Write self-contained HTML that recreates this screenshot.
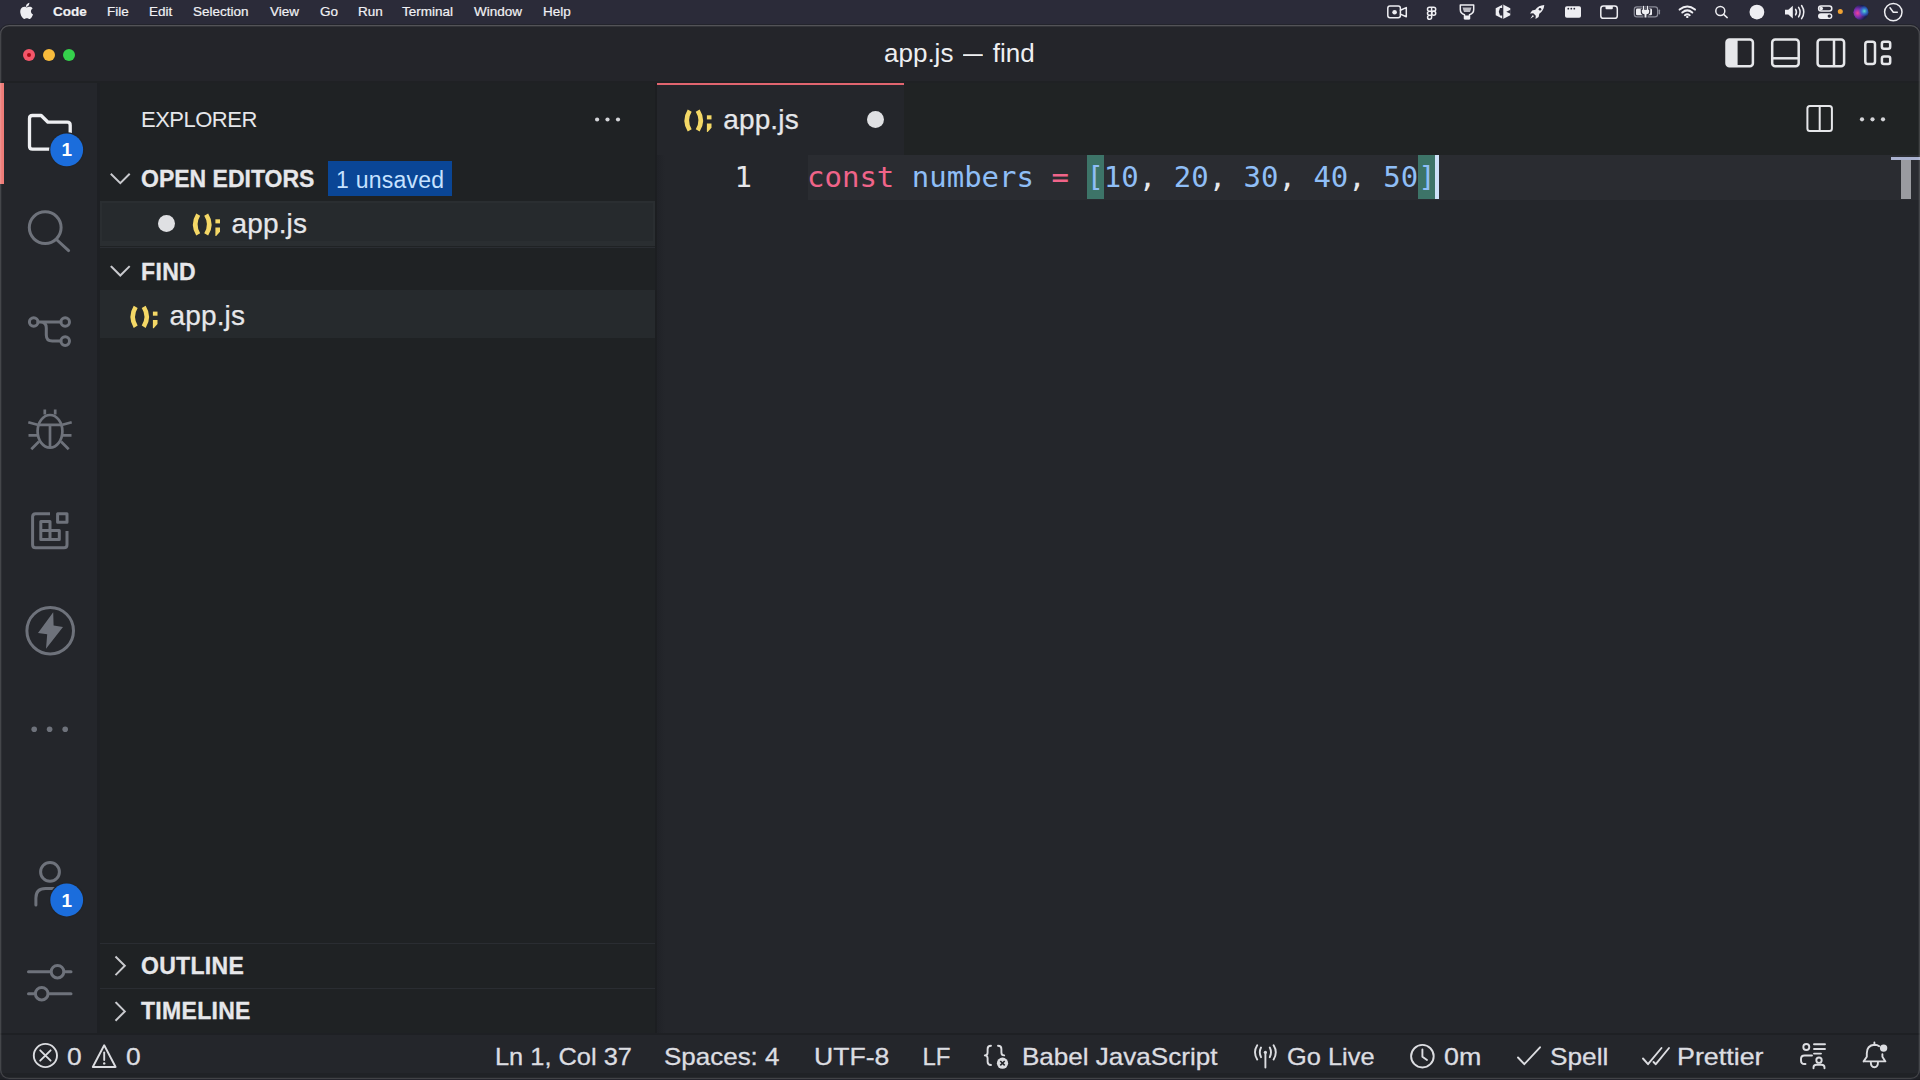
<!DOCTYPE html>
<html lang="en">
<head>
<meta charset="utf-8">
<title>app.js — find</title>
<style>
*{box-sizing:border-box;margin:0;padding:0}
html,body{width:1920px;height:1080px;overflow:hidden;background:#2b2b39}
body{position:relative;font-family:"Liberation Sans",sans-serif;color:#e6e7ea}
.b{position:absolute}
.t{position:absolute;white-space:nowrap;line-height:1}
svg{position:absolute;overflow:visible}
.ic{fill:none;stroke:#6e727b;stroke-width:2.6;stroke-linecap:round;stroke-linejoin:round}
.iw{fill:none;stroke:#e4e5e8;stroke-width:2;stroke-linecap:round;stroke-linejoin:round}
#menubar .t{font-size:13.5px;color:#f1f1f4;top:5px;-webkit-text-stroke:.2px #f1f1f4}
.hdr{font-size:23px;font-weight:bold;color:#e6e7ea;-webkit-text-stroke:.3px #e6e7ea}
.file{font-size:28px;letter-spacing:.15px;color:#e6e7ea;-webkit-text-stroke:.25px #e6e7ea}
.sb{font-size:24px;color:#dcdde1;top:1045px;transform-origin:0 50%;-webkit-text-stroke:.3px #dcdde1}
.code{font-family:"DejaVu Sans Mono","Liberation Mono",monospace;font-size:29px}
</style>
</head>
<body>
<!-- ===== macOS menu bar ===== -->
<div id="menubar" class="b" style="left:0;top:0;width:1920px;height:25px;background:#2b2b39">
  <span class="t" style="left:53px;font-weight:bold">Code</span>
  <span class="t" style="left:107px">File</span>
  <span class="t" style="left:149px">Edit</span>
  <span class="t" style="left:193px">Selection</span>
  <span class="t" style="left:270px">View</span>
  <span class="t" style="left:320px">Go</span>
  <span class="t" style="left:358px">Run</span>
  <span class="t" style="left:402px">Terminal</span>
  <span class="t" style="left:474px">Window</span>
  <span class="t" style="left:543px">Help</span>
</div>
<svg class="b" style="left:0;top:0" width="1920" height="25" viewBox="0 0 1920 25"><path d="M26.9 3.4C27 4.6 26.6 5.6 25.9 6.400C25.200 7.200 24.300 7.700 23.300 7.600C23.200 6.500 23.700 5.500 24.300 4.800C25 4 26.100 3.500 26.900 3.400ZM30.300 9.100C29.300 9.700 28.500 10.700 28.500 12.100C28.500 13.700 29.500 14.900 30.700 15.400C30.400 16.300 29.900 17.200 29.300 18C28.600 19 27.800 19.800 26.800 19.800C25.800 19.800 25.500 19.200 24.300 19.200C23.100 19.200 22.700 19.800 21.800 19.800C20.800 19.900 20 18.900 19.300 17.900C17.800 15.800 16.700 12 18.200 9.500C18.900 8.200 20.300 7.400 21.700 7.400C22.700 7.400 23.700 8.100 24.300 8.100C24.900 8.100 26.100 7.300 27.400 7.400C27.900 7.400 29.400 7.600 30.300 9.100Z" fill="#eeeef2" transform="translate(3.4,-0.5) scale(.965,.98)"/><rect x="1387.8" y="6.1" width="12.6" height="11.7" rx="2.2" fill="none" stroke="#eeeef2" stroke-width="1.5" stroke-linejoin="round" stroke-linecap="round"/><circle cx="1394.6" cy="12.3" r="2.3" fill="#eeeef2"/><path d="M1400.4 10.3L1406.3 7.6V16.8L1400.4 14.1" fill="none" stroke="#eeeef2" stroke-width="1.5" stroke-linejoin="round" stroke-linecap="round"/><path d="M1431.6 7.300H1429.500A2 2 0 0 0 1429.500 11.300H1431.600ZM1431.600 11.300H1429.500A2 2 0 0 0 1429.500 15.300H1431.600ZM1431.600 7.300H1433.700A2 2 0 0 1 1433.700 11.300H1431.600ZM1431.600 15.300H1429.500A2 2 0 1 0 1431.600 17.300Z" fill="none" stroke="#eeeef2" stroke-width="1.5" stroke-linejoin="round" stroke-linecap="round" stroke-width="1.300"/><circle cx="1433.700" cy="13.300" r="2" fill="none" stroke="#eeeef2" stroke-width="1.5" stroke-linejoin="round" stroke-linecap="round" stroke-width="1.300"/><path d="M1460.3 5H1473.700V9.500Q1473.700 13.500 1469.500 14.800V18.800H1464.500V14.800Q1460.300 13.500 1460.300 9.500Z" fill="none" stroke="#eeeef2" stroke-width="1.5" stroke-linejoin="round" stroke-linecap="round" stroke-width="1.600"/><path d="M1462.5 7.500H1471.500L1470 12H1464Z" fill="#eeeef2" opacity=".75"/><rect x="1464.800" y="15.500" width="4.400" height="3.800" fill="#eeeef2"/><path d="M1503 4.5L1510.3 8.2V15.3L1503 19L1495.700 15.300V8.200Z" fill="#eeeef2"/><path d="M1502.200 4.500H1503.300V19H1502.200Z M1500 8H1503.300V15.500H1500L1498.800 11.800Z" fill="#2b2b39"/><path d="M1510.500 9.800L1506.300 11.800L1510.500 13.700Z" fill="#2b2b39"/><path d="M1544.300 5Q1538.500 5.300 1535.300 9.800L1532.200 10.500L1530 13.600L1533.300 13.300L1535.800 15.800L1535.500 19L1538.600 16.900L1539.300 13.800Q1543.800 10.600 1544.300 5Z" fill="#eeeef2"/><circle cx="1540" cy="9.300" r="1.300" fill="#2b2b39"/><path d="M1532.800 15L1530.300 18.700L1534 16.300Z" fill="#eeeef2"/><rect x="1565" y="6.300" width="16" height="11.400" rx="1.800" fill="#eeeef2"/><circle cx="1568.300" cy="8.700" r="0.900" fill="#2b2b39"/><circle cx="1571.300" cy="8.700" r="0.900" fill="#2b2b39"/><circle cx="1574.300" cy="8.700" r="0.900" fill="#2b2b39"/><rect x="1600.800" y="6.100" width="16.500" height="12.200" rx="2.600" fill="none" stroke="#eeeef2" stroke-width="1.5" stroke-linejoin="round" stroke-linecap="round" stroke-width="1.600"/><path d="M1605.500 6H1612.800V8.300Q1612.800 9.300 1611.800 9.300H1606.500Q1605.500 9.300 1605.500 8.300Z" fill="#eeeef2"/><rect x="1634.300" y="6.900" width="23.300" height="10" rx="2.600" fill="none" stroke="#8b8c98" stroke-width="1.200"/><path d="M1659.300 10.300V13.700" stroke="#8b8c98" stroke-width="1.500" stroke-linecap="round"/><rect x="1636" y="8.600" width="16" height="6.600" rx="1.300" fill="#eeeef2"/><path d="M1643.500 6.300V9.500M1647.500 6.300V9.500" stroke="#2b2b39" stroke-width="3.200"/><path d="M1641.300 9.300H1649.700V12Q1649.700 14.300 1647 14.800V18H1644V14.800Q1641.300 14.300 1641.300 12Z" fill="#eeeef2" stroke="#2b2b39" stroke-width="1.100"/><path d="M1643.500 6.500V9.500M1647.500 6.500V9.500" stroke="#eeeef2" stroke-width="1.400" stroke-linecap="round"/><path d="M1679.600 9.600Q1687.300 3.300 1695 9.600M1682.300 12.500Q1687.300 8.300 1692.300 12.500M1684.900 15.200Q1687.300 13.300 1689.700 15.200" fill="none" stroke="#eeeef2" stroke-width="2" stroke-linecap="round"/><circle cx="1687.300" cy="16.900" r="1.200" fill="#eeeef2"/><circle cx="1720.300" cy="11" r="4.500" fill="none" stroke="#eeeef2" stroke-width="1.5" stroke-linejoin="round" stroke-linecap="round" stroke-width="1.700"/><path d="M1723.600 14.400L1727.200 17.600" fill="none" stroke="#eeeef2" stroke-width="1.5" stroke-linejoin="round" stroke-linecap="round" stroke-width="1.900"/><circle cx="1756.900" cy="12.100" r="7.400" fill="#eeeef2"/><path d="M1785 9.800H1788.300L1792.800 5.800V18.400L1788.300 14.400H1785Z" fill="#eeeef2"/><path d="M1795.600 9.300Q1797.300 12.100 1795.600 14.900M1798.600 7.300Q1801.600 12.100 1798.600 16.900M1801.600 5.500Q1806 12.100 1801.600 18.700" fill="none" stroke="#eeeef2" stroke-width="1.500" stroke-linecap="round"/><rect x="1818.600" y="6" width="13.200" height="4.900" rx="2.450" fill="none" stroke="#eeeef2" stroke-width="1.5" stroke-linejoin="round" stroke-linecap="round" stroke-width="1.300"/><circle cx="1821.300" cy="8.450" r="1.700" fill="#eeeef2"/><rect x="1818" y="13.200" width="14.400" height="5.800" rx="2.900" fill="#eeeef2"/><circle cx="1829.300" cy="16.100" r="1.700" fill="#2b2b39"/><circle cx="1840.300" cy="11.600" r="2.500" fill="#f0a233"/><defs><radialGradient id="sg1" cx="28%" cy="55%" r="55%"><stop offset="0" stop-color="#f0409a"/><stop offset="0.5" stop-color="#7a2fb0"/><stop offset="1" stop-color="#1b2050"/></radialGradient><radialGradient id="sg2" cx="72%" cy="42%" r="38%"><stop offset="0" stop-color="#56e6d4"/><stop offset="0.600" stop-color="#2f6fe0" stop-opacity=".7"/><stop offset="1" stop-color="#2f6fe0" stop-opacity="0"/></radialGradient></defs><circle cx="1861" cy="12.300" r="7.600" fill="url(#sg1)"/><circle cx="1861" cy="12.300" r="7.600" fill="url(#sg2)"/><circle cx="1893.300" cy="12.100" r="8.700" fill="none" stroke="#eeeef2" stroke-width="1.5" stroke-linejoin="round" stroke-linecap="round" stroke-width="1.300"/><path d="M1890 7.800L1893.300 12.300H1897.300" fill="none" stroke="#eeeef2" stroke-width="1.5" stroke-linejoin="round" stroke-linecap="round" stroke-width="1.300"/></svg>

<!-- ===== window ===== -->
<div id="win" class="b" style="left:0;top:25px;width:1920px;height:1055px;background:#24262b;border-radius:11px 11px 0 0;overflow:hidden">
</div>
<!-- title bar -->
<div class="b" style="left:0;top:25px;width:1920px;height:55.5px;background:#24252a;border-radius:9px 9px 0 0"></div>
<div class="b" style="left:0;top:80.5px;width:1920px;height:2.5px;background:#1f2124"></div>
<span class="t" id="title" style="left:884px;top:40px;font-size:26px;color:#eeeff1">app.js <span style="display:inline-block;transform:scaleX(.76);margin:0 -0.5px 0 -0.5px">—</span> find</span>
<div class="b" style="left:23px;top:49px;width:12px;height:12px;border-radius:50%;background:#f4566a"></div>
<div class="b" style="left:27px;top:53px;width:4px;height:4px;border-radius:50%;background:#a80812"></div>
<div class="b" style="left:43px;top:49px;width:12px;height:12px;border-radius:50%;background:#f8bb3c"></div>
<div class="b" style="left:63px;top:49px;width:12px;height:12px;border-radius:50%;background:#35d24c"></div>
<svg class="b" style="left:0;top:0" width="1920" height="1080" viewBox="0 0 1920 1080" ><rect x="1726.5" y="39.6" width="26.4" height="26.6" rx="3" fill="none" stroke="#e6e7ea" stroke-width="2.5"/><path d="M1729.5 39.6H1737.6V66.2H1729.5Q1726.5 66.2 1726.5 63.2V42.6Q1726.5 39.6 1729.5 39.6Z" fill="#e6e7ea"/><rect x="1772.2" y="39.6" width="26.5" height="26.6" rx="3" fill="none" stroke="#e6e7ea" stroke-width="2.5"/><line x1="1772.2" y1="58.3" x2="1798.7" y2="58.3" fill="none" stroke="#e6e7ea" stroke-width="2.5"/><rect x="1817.6" y="39.6" width="26.5" height="26.6" rx="3" fill="none" stroke="#e6e7ea" stroke-width="2.5"/><line x1="1834" y1="39.6" x2="1834" y2="66.2" fill="none" stroke="#e6e7ea" stroke-width="2.5"/><rect x="1865.3" y="41.8" width="9.7" height="22.2" rx="2.5" fill="none" stroke="#e6e7ea" stroke-width="2.5"/><rect x="1881.9" y="41.8" width="8.3" height="6.9" rx="2" fill="none" stroke="#e6e7ea" stroke-width="2.5"/><rect x="1881.9" y="56.6" width="8.3" height="7.4" rx="2" fill="none" stroke="#e6e7ea" stroke-width="2.5"/></svg>

<!-- activity bar -->
<div class="b" style="left:0;top:83px;width:97px;height:951px;background:#24262b"></div>
<div class="b" style="left:97px;top:83px;width:3px;height:951px;background:#1e2024"></div>
<div class="b" style="left:0;top:83px;width:4px;height:101px;background:#ee7c78"></div>
<svg class="b" style="left:0;top:0" width="1920" height="1080" viewBox="0 0 1920 1080" ><path d="M32.5 115.5H41.2L48 122.2H67.2Q70.2 122.2 70.2 125.2V149.2H32.5Q29.5 149.2 29.5 146.2V118.5Q29.5 115.5 32.5 115.5Z" fill="none" stroke="#eeeff2" stroke-width="3.3" stroke-linejoin="round"/><circle cx="45.2" cy="227.6" r="15.9" fill="none" stroke="#6e727b" stroke-width="3" stroke-linecap="round" stroke-linejoin="round"/><line x1="57" y1="240" x2="68.6" y2="250.6" fill="none" stroke="#6e727b" stroke-width="3" stroke-linecap="round" stroke-linejoin="round" stroke-linecap="butt"/><circle cx="33.7" cy="322" r="4.3" fill="none" stroke="#6e727b" stroke-width="3" stroke-linecap="round" stroke-linejoin="round"/><circle cx="65.2" cy="322" r="4.3" fill="none" stroke="#6e727b" stroke-width="3" stroke-linecap="round" stroke-linejoin="round"/><circle cx="65.2" cy="341.1" r="4.3" fill="none" stroke="#6e727b" stroke-width="3" stroke-linecap="round" stroke-linejoin="round"/><path d="M38 322H60.9M40.5 322Q46.3 322 46.3 328V335Q46.3 341.1 52.3 341.1H60.9" fill="none" stroke="#6e727b" stroke-width="3" stroke-linecap="round" stroke-linejoin="round"/><ellipse cx="50" cy="431.3" rx="12.4" ry="16.3" fill="none" stroke="#6e727b" stroke-width="2.7" stroke-linecap="butt" stroke-linejoin="round"/><path d="M37.8 424.8H62.2M50 424.8V447.5M44.8 409.5V414.5M55.2 409.5V414.5M28.3 422.3L37.5 424.8M71.7 422.3L62.5 424.8M28.5 435.3H37.5M71.5 435.3H62.5M31.3 449.2L39 441.5M68.7 449.2L61 441.5" fill="none" stroke="#6e727b" stroke-width="2.7" stroke-linecap="butt" stroke-linejoin="round"/><path d="M50 513.7H35.6Q32.6 513.7 32.6 516.7V544.8Q32.6 547.8 35.6 547.8H64Q67 547.8 67 544.8V531" fill="none" stroke="#6e727b" stroke-width="3" stroke-linejoin="round"/><rect x="57.6" y="513.7" width="9.4" height="8.6" fill="none" stroke="#6e727b" stroke-width="3" stroke-linejoin="round"/><path d="M40.8 521.5H50V530.5H59.3V539.6H40.8ZM40.8 530.5H50V539.6" fill="none" stroke="#6e727b" stroke-width="3" stroke-linejoin="round"/><circle cx="50.2" cy="630.7" r="23.3" fill="none" stroke="#6e727b" stroke-width="3" stroke-linecap="round" stroke-linejoin="round"/><polygon points="53.2,612.2 38,633 47.2,634.3 46,648.8 63,627 53.6,625.6" fill="#6e727b"/><circle cx="34.2" cy="729.3" r="2.8" fill="#6e727b"/><circle cx="49.6" cy="729.3" r="2.8" fill="#6e727b"/><circle cx="65.2" cy="729.3" r="2.8" fill="#6e727b"/><circle cx="50" cy="871.9" r="9.4" fill="none" stroke="#6e727b" stroke-width="3" stroke-linecap="round" stroke-linejoin="round"/><path d="M35.9 905V898Q35.9 888.6 45.5 888.6H58" fill="none" stroke="#6e727b" stroke-width="3" stroke-linecap="round" stroke-linejoin="round"/><path d="M28.5 971.7H50M65 971.7H71M28.5 993.7H34M49.5 993.7H71" fill="none" stroke="#6e727b" stroke-width="3" stroke-linecap="round" stroke-linejoin="round"/><circle cx="57.5" cy="971.7" r="6.3" fill="none" stroke="#6e727b" stroke-width="3" stroke-linecap="round" stroke-linejoin="round"/><circle cx="41.7" cy="993.7" r="6.3" fill="none" stroke="#6e727b" stroke-width="3" stroke-linecap="round" stroke-linejoin="round"/><circle cx="66.7" cy="149.8" r="17.6" fill="#222429"/><circle cx="66.7" cy="149.8" r="16.4" fill="#1b6ddc"/><circle cx="66.7" cy="900" r="17.6" fill="#222429"/><circle cx="66.7" cy="900" r="16.4" fill="#1b6ddc"/></svg><span class="t" style="left:61.4px;top:140.4px;font-size:19px;font-weight:bold;color:#fff">1</span><span class="t" style="left:61.4px;top:890.6px;font-size:19px;font-weight:bold;color:#fff">1</span>

<!-- sidebar -->
<div class="b" style="left:100px;top:83px;width:555px;height:951px;background:#1f2224"></div>
<div class="b" style="left:655px;top:83px;width:2px;height:951px;background:#1c1e21"></div>
<span class="t" style="left:141px;top:109px;font-size:22px;letter-spacing:-0.5px;color:#e6e7ea">EXPLORER</span>
<span class="t hdr" style="left:141px;top:168px">OPEN EDITORS</span>
<div class="b" style="left:328px;top:161px;width:123.500px;height:35px;background:#0a4696"></div>
<span class="t" style="left:336px;top:169px;font-size:23px;letter-spacing:.25px;color:#c6e2ff">1 unsaved</span>
<div class="b" style="left:100px;top:201px;width:555px;height:45.3px;background:#262a2d;border:2px solid #2a2e31;border-bottom-width:5px"></div>
<div class="b" style="left:157.5px;top:215px;width:17px;height:17px;border-radius:50%;background:#dfe0e3"></div>
<span class="t file" style="left:231.5px;top:209.5px">app.js</span>
<div class="b" style="left:100px;top:247px;width:555px;height:1px;background:#2a2d32"></div>
<span class="t hdr" style="left:141px;top:260.5px;letter-spacing:.35px">FIND</span>
<div class="b" style="left:100px;top:289.5px;width:555px;height:48.5px;background:#262a2d"></div>
<span class="t file" style="left:169.5px;top:301.5px">app.js</span>
<div class="b" style="left:100px;top:943px;width:555px;height:1px;background:#2a2d32"></div>
<span class="t hdr" style="left:141px;top:954.5px;letter-spacing:.3px">OUTLINE</span>
<div class="b" style="left:100px;top:988px;width:555px;height:1px;background:#2a2d32"></div>
<span class="t hdr" style="left:141px;top:1000.3px;letter-spacing:.3px">TIMELINE</span>
<svg class="b" style="left:0;top:0" width="1920" height="1080" viewBox="0 0 1920 1080" ><polyline fill="none" stroke="#c9cace" stroke-width="2" stroke-linecap="square" stroke-linejoin="miter" points="111.5,174.5 120.3,183.2 129,174.5"/><polyline fill="none" stroke="#c9cace" stroke-width="2" stroke-linecap="square" stroke-linejoin="miter" points="111.5,266.8 120.3,275.5 129,266.8"/><polyline fill="none" stroke="#c9cace" stroke-width="2" stroke-linecap="square" stroke-linejoin="miter" points="116.2,957.2 124.8,965.8 116.2,974.4"/><polyline fill="none" stroke="#c9cace" stroke-width="2" stroke-linecap="square" stroke-linejoin="miter" points="116.2,1002.8 124.8,1011.4 116.2,1020"/><circle cx="597.1" cy="119.5" r="2.1" fill="#d4d5d9"/><circle cx="607.5" cy="119.5" r="2.1" fill="#d4d5d9"/><circle cx="618" cy="119.5" r="2.1" fill="#d4d5d9"/><g transform="translate(192,213)"><g fill="#f4d866"><path d="M6.2 1.6Q0.2 11.5 6.2 21.4" fill="none" stroke="#f4d866" stroke-width="4.6"/><path d="M14.2 1.6Q20.4 11.5 14.2 21.4" fill="none" stroke="#f4d866" stroke-width="4.6"/><rect x="23.4" y="6.3" width="4.6" height="4.1"/><path d="M23.4 14.6H28V18.7L24.2 22.9H23.4Z"/></g></g><g transform="translate(129.5,305.3)"><g fill="#f4d866"><path d="M6.2 1.6Q0.2 11.5 6.2 21.4" fill="none" stroke="#f4d866" stroke-width="4.6"/><path d="M14.2 1.6Q20.4 11.5 14.2 21.4" fill="none" stroke="#f4d866" stroke-width="4.6"/><rect x="23.4" y="6.3" width="4.6" height="4.1"/><path d="M23.4 14.6H28V18.7L24.2 22.9H23.4Z"/></g></g></svg>

<!-- editor -->
<div class="b" style="left:657px;top:155px;width:8px;height:879px;background:linear-gradient(90deg,#202227,#24262b)"></div>
<div class="b" style="left:657px;top:83px;width:1263px;height:72px;background:#202324"></div>
<div class="b" style="left:657px;top:83px;width:247px;height:72px;background:#24262b"></div>
<div class="b" style="left:657px;top:82.5px;width:247px;height:2.6px;background:#e1656f"></div>
<span class="t file" style="left:723.2px;top:106px">app.js</span>
<div class="b" style="left:866.5px;top:111px;width:17px;height:17px;border-radius:50%;background:#dfe0e3"></div>
<div class="b" style="left:807.5px;top:155px;width:1112.5px;height:44.6px;background:#2a2c31"></div>
<div class="b" style="left:1086.5px;top:155px;width:17.5px;height:44px;background:#3d7468"></div>
<div class="b" style="left:1417.700px;top:155px;width:17.500px;height:44px;background:#3d7468"></div>
<div class="b" style="left:1435px;top:155px;width:4px;height:44px;background:#cde1f8"></div>
<span class="t code" style="left:734.5px;top:162.5px;color:#e6e7ea">1</span>
<span class="t code" id="code" style="left:807px;top:162.5px;color:#e6e7ea"><span style="color:#f06489">const</span> <span style="color:#8fbef6">numbers</span> <span style="color:#f06489">=</span> <span style="color:#8fbef6">[10</span>, <span style="color:#8fbef6">20</span>, <span style="color:#8fbef6">30</span>, <span style="color:#8fbef6">40</span>, <span style="color:#8fbef6">50]</span></span>
<div class="b" style="left:1891px;top:157px;width:29px;height:3px;background:#aab2d0"></div>
<div class="b" style="left:1901px;top:160px;width:10px;height:39px;background:#9a9ba0"></div>
<svg class="b" style="left:0;top:0" width="1920" height="1080" viewBox="0 0 1920 1080" ><g transform="translate(683.5,109)"><g fill="#f4d866"><path d="M6.2 1.6Q0.2 11.5 6.2 21.4" fill="none" stroke="#f4d866" stroke-width="4.6"/><path d="M14.2 1.6Q20.4 11.5 14.2 21.4" fill="none" stroke="#f4d866" stroke-width="4.6"/><rect x="23.4" y="6.3" width="4.6" height="4.1"/><path d="M23.4 14.6H28V18.7L24.2 22.9H23.4Z"/></g></g><rect x="1807.4" y="106" width="24.5" height="25" rx="2.5" fill="none" stroke="#e6e7ea" stroke-width="2"/><line x1="1819.7" y1="106" x2="1819.7" y2="131" stroke="#e6e7ea" stroke-width="2"/><circle cx="1862" cy="119.3" r="2.1" fill="#d4d5d9"/><circle cx="1872.5" cy="119.3" r="2.1" fill="#d4d5d9"/><circle cx="1883" cy="119.3" r="2.1" fill="#d4d5d9"/></svg>

<!-- status bar -->
<div class="b" style="left:0;top:1034px;width:1920px;height:46px;background:#24262b"></div>
<div class="b" style="left:0;top:1033px;width:1920px;height:2px;background:#1e2024"></div>
<span class="t sb" style="left:67.2px;transform:scaleX(1.1)">0</span>
<span class="t sb" style="left:126.3px;transform:scaleX(1.1)">0</span>
<span class="t sb" style="left:494.6px;transform:scaleX(1.058)">Ln 1, Col 37</span>
<span class="t sb" style="left:663.6px;transform:scaleX(1.082)">Spaces: 4</span>
<span class="t sb" style="left:813.8px;transform:scaleX(1.108)">UTF-8</span>
<span class="t sb" style="left:922.5px;transform:scaleX(1.0)">LF</span>
<span class="t sb" style="left:1021.5px;transform:scaleX(1.085)">Babel JavaScript</span>
<span class="t sb" style="left:1287px;transform:scaleX(1.058)">Go Live</span>
<span class="t sb" style="left:1443.8px;transform:scaleX(1.117)">0m</span>
<span class="t sb" style="left:1550.2px;transform:scaleX(1.092)">Spell</span>
<span class="t sb" style="left:1677px;transform:scaleX(1.118)">Prettier</span>
<svg class="b" style="left:0;top:0" width="1920" height="1080" viewBox="0 0 1920 1080" ><circle cx="45.4" cy="1055.5" r="11.6" fill="none" stroke="#dcdde1" stroke-width="1.9" stroke-linecap="round" stroke-linejoin="round"/><path d="M40.2 1050.3L50.6 1060.7M50.6 1050.3L40.2 1060.7" fill="none" stroke="#dcdde1" stroke-width="1.9" stroke-linecap="round" stroke-linejoin="round"/><path d="M104.2 1045.3L115.6 1067H92.8Z" fill="none" stroke="#dcdde1" stroke-width="1.9" stroke-linecap="round" stroke-linejoin="round" stroke-linejoin="miter"/><path d="M104.2 1052.5V1060" fill="none" stroke="#dcdde1" stroke-width="1.9" stroke-linecap="round" stroke-linejoin="round"/><circle cx="104.2" cy="1063.4" r="1.2" fill="#dcdde1"/><path d="M991 1045.8Q987.6 1045.8 987.6 1049V1052.5Q987.6 1055.4 984.8 1055.4Q987.6 1055.4 987.6 1058.3V1061.8Q987.6 1065 991 1065" fill="none" stroke="#dcdde1" stroke-width="1.9" stroke-linecap="round" stroke-linejoin="round"/><path d="M998 1045.8Q1001.4 1045.8 1001.4 1049V1052.5Q1001.4 1055.4 1004.2 1055.4" fill="none" stroke="#dcdde1" stroke-width="1.9" stroke-linecap="round" stroke-linejoin="round"/><circle cx="1002.5" cy="1063.2" r="5.6" fill="#dcdde1"/><path d="M1000.3 1061L1004.7 1065.4M1004.7 1061L1000.3 1065.4" stroke="#24262b" stroke-width="1.6" fill="none"/><path d="M1265.4 1053V1067.5" fill="none" stroke="#dcdde1" stroke-width="1.9" stroke-linecap="round" stroke-linejoin="round"/><circle cx="1265.4" cy="1052.3" r="1.6" fill="#dcdde1"/><path d="M1261 1047.5Q1258.6 1052.3 1261 1057.2M1269.8 1047.5Q1272.2 1052.3 1269.8 1057.2M1257.2 1045.2Q1252.8 1052.3 1257.2 1059.5M1273.6 1045.2Q1278 1052.3 1273.6 1059.5" fill="none" stroke="#dcdde1" stroke-width="1.9" stroke-linecap="round" stroke-linejoin="round"/><circle cx="1422.4" cy="1056.2" r="11.3" fill="none" stroke="#dcdde1" stroke-width="1.9" stroke-linecap="round" stroke-linejoin="round"/><path d="M1422.4 1049.5V1056.8L1427 1060" fill="none" stroke="#dcdde1" stroke-width="1.9" stroke-linecap="round" stroke-linejoin="round"/><path d="M1518 1057.5L1524.3 1064.2L1540 1047.3" fill="none" stroke="#dcdde1" stroke-width="1.9" stroke-linecap="round" stroke-linejoin="round"/><path d="M1643 1058.5L1648 1064.2L1661.5 1048M1653.5 1062L1655.8 1064.2L1669 1048" fill="none" stroke="#dcdde1" stroke-width="1.9" stroke-linecap="round" stroke-linejoin="round" stroke-width="1.7"/><circle cx="1806.3" cy="1047" r="3" fill="none" stroke="#dcdde1" stroke-width="1.9" stroke-linecap="round" stroke-linejoin="round" stroke-width="1.7"/><path d="M1812 1055.5H1804.5Q1801 1055.5 1801 1059V1060.5Q1801 1064 1804.5 1064H1805.5" fill="none" stroke="#dcdde1" stroke-width="1.9" stroke-linecap="round" stroke-linejoin="round" stroke-width="1.7"/><path d="M1814 1044.2H1825M1814 1049H1825M1814 1053.6H1821" fill="none" stroke="#dcdde1" stroke-width="1.9" stroke-linecap="round" stroke-linejoin="round" stroke-width="1.7"/><circle cx="1819" cy="1060.2" r="2.7" fill="none" stroke="#dcdde1" stroke-width="1.9" stroke-linecap="round" stroke-linejoin="round" stroke-width="1.7"/><path d="M1813.5 1068.3V1067.5Q1813.5 1064.8 1816.5 1064.8H1821.5Q1824.5 1064.8 1824.5 1067.5V1068.3" fill="none" stroke="#dcdde1" stroke-width="1.9" stroke-linecap="round" stroke-linejoin="round" stroke-width="1.7"/><path d="M1863.6 1061.4L1866.8 1056.8V1053.3Q1866.8 1045.2 1874.4 1044.7Q1877.4 1044.7 1879.2 1046.200M1882.400 1054.300V1056.800L1885.400 1061.400H1863.600M1870.800 1062Q1870.800 1067.200 1874.400 1067.200Q1878 1067.200 1878 1062M1874.400 1042.400V1044.500" fill="none" stroke="#dcdde1" stroke-width="1.9" stroke-linecap="round" stroke-linejoin="round"/><circle cx="1883.600" cy="1048.100" r="3.700" fill="#dcdde1"/></svg>
<div class="b" style="left:0;top:1073px;width:1920px;height:6px;background:#202226"></div>
<div class="b" style="left:0;top:1079px;width:1920px;height:1px;background:#1b1c22"></div>
<div class="b" style="left:0;top:25px;width:1920px;height:1054px;border-radius:9px;box-shadow:inset 0 0 0 1.3px rgba(255,255,255,.15),inset 0 1.5px 0 0 rgba(255,255,255,.08), 0 0 0 1px #23242c"></div>
</body>
</html>
